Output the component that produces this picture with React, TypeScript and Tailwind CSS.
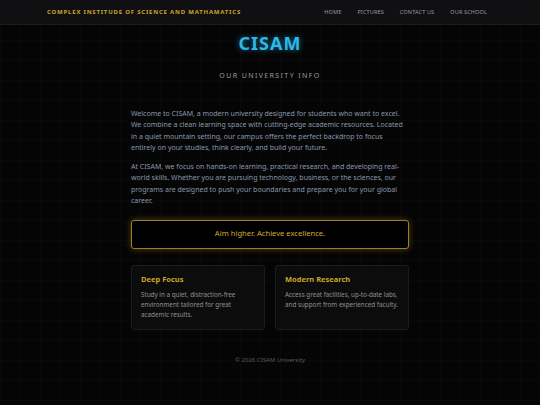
const font = "font-['Noto_Sans','Open_Sans',sans-serif]";

function Header() {
  return (
    <header className="flex h-[25px] items-center justify-between border-b border-[#1e1c14] bg-[#101013] pl-[47px] pr-[53px]">
      <div className="text-[6px] font-bold tracking-[0.8px] text-[#c9a62a]">
        COMPLEX INSTITUDE OF SCIENCE AND MATHAMATICS
      </div>
      <nav className="flex gap-[16px] text-[5.5px] tracking-[0.15px] text-[#9a9aa0]">
        <span>HOME</span>
        <span>PICTURES</span>
        <span>CONTACT US</span>
        <span>OUR SCHOOL</span>
      </nav>
    </header>
  );
}

function Card({ title, text }: { title: string; text: string }) {
  return (
    <div className="flex-1 rounded-[3px] border border-[#1c1c1c] bg-[#0c0c0c] px-[9px] pb-[9px] pt-[8px]">
      <h3 className="text-[7.5px] font-bold text-[#c9a62a]">{title}</h3>
      <p className="mt-[5px] text-[6.3px] leading-[10px] text-[#8f8f8f]">{text}</p>
    </div>
  );
}

export default function App() {
  return (
    <div
      className={`${font} min-h-[405px] bg-[#050505] bg-[linear-gradient(rgba(255,255,255,0.016)_1px,transparent_1px),linear-gradient(90deg,rgba(255,255,255,0.016)_1px,transparent_1px)] bg-[size:20px_20px]`}
    >
      <Header />
      <main className="mx-auto flex w-[278px] flex-col items-center">
        <h1 className="mt-[5px] text-[18px] font-bold tracking-[1px] text-[#2bb8ea] [text-shadow:0_0_6px_rgba(43,184,234,0.6)]">
          CISAM
        </h1>
        <h2 className="mt-[14px] text-[7px] tracking-[1.4px] text-[#9a9a9a]">
          OUR UNIVERSITY INFO
        </h2>
        <div className="mt-[26px] flex flex-col gap-[7px] text-[7px] leading-[11.5px] text-[#8a99ab]">
          <p>
            Welcome to CISAM, a modern university designed for students who want to excel. We combine a
            clean learning space with cutting-edge academic resources. Located in a quiet mountain setting,
            our campus offers the perfect backdrop to focus entirely on your studies, think clearly, and
            build your future.
          </p>
          <p>
            At CISAM, we focus on hands-on learning, practical research, and developing real-world skills.
            Whether you are pursuing technology, business, or the sciences, our programs are designed to
            push your boundaries and prepare you for your global career.
          </p>
        </div>
        <div className="mt-[13px] flex h-[29px] w-full items-center justify-center rounded-[3px] border border-[#9e801f] bg-black text-[7.6px] text-[#d0ad32] shadow-[0_0_6px_rgba(200,160,40,0.4)]">
          Aim higher. Achieve excellence.
        </div>
        <div className="mt-[16px] flex w-full gap-[10px]">
          <Card
            title="Deep Focus"
            text="Study in a quiet, distraction-free environment tailored for great academic results."
          />
          <Card
            title="Modern Research"
            text="Access great facilities, up-to-date labs, and support from experienced faculty."
          />
        </div>
        <footer className="mt-[26px] text-[6px] text-[#5a5a5a]">© 2026 CISAM University</footer>
      </main>
    </div>
  );
}
